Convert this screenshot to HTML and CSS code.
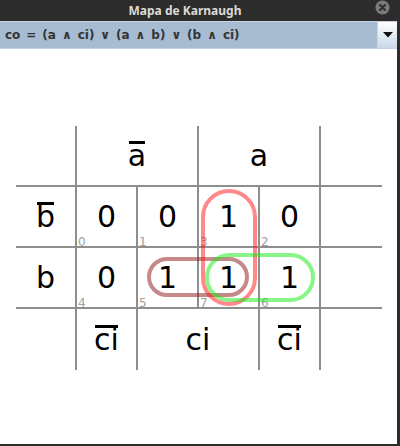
FILE: index.html
```html
<!DOCTYPE html>
<html>
<head>
    <title>Mapa de Karnaugh</title>
    <link rel="stylesheet" href="styles.css">
</head>
<body>
    <div class="window">
        <div class="titlebar">
            <span class="title">Mapa de Karnaugh</span>
            <svg class="close" width="15" height="15" viewBox="0 0 15 15">
                <circle cx="7.5" cy="7.5" r="7" fill="#7b7b7b"/>
                <path d="M5 5 L10 10 M10 5 L5 10" stroke="#2e2e2e" stroke-width="2" stroke-linecap="round"/>
            </svg>
        </div>
        <div class="combo">
            <div class="combo-field">co = (a ∧ ci) ∨ (a ∧ b) ∨ (b ∧ ci)</div>
            <div class="combo-button">
                <svg width="10" height="6" viewBox="0 0 10 6"><path d="M0 0 H10 L5 5.5 Z" fill="#111"/></svg>
            </div>
        </div>
        <div class="map-area">
            <div class="kmap">
                <!-- row 0 -->
                <div class="cell r b"></div>
                <div class="cell r b span2"><span class="neg">a</span></div>
                <div class="cell r b span2">a</div>
                <div class="cell b"></div>
                <!-- row 1 -->
                <div class="cell r b"><span class="neg">b</span></div>
                <div class="cell r b">0<span class="idx">0</span></div>
                <div class="cell r b">0<span class="idx">1</span></div>
                <div class="cell r b">1<span class="idx">3</span></div>
                <div class="cell r b">0<span class="idx">2</span></div>
                <div class="cell b"></div>
                <!-- row 2 -->
                <div class="cell r b">b</div>
                <div class="cell r b">0<span class="idx">4</span></div>
                <div class="cell r b">1<span class="idx">5</span></div>
                <div class="cell r b">1<span class="idx">7</span></div>
                <div class="cell r b">1<span class="idx">6</span></div>
                <div class="cell b"></div>
                <!-- row 3 -->
                <div class="cell r"></div>
                <div class="cell r"><span class="neg">ci</span></div>
                <div class="cell r span2">ci</div>
                <div class="cell r"><span class="neg">ci</span></div>
                <div class="cell"></div>

                <svg class="groups" width="366" height="244" viewBox="0 0 366 244">
                    <rect x="133" y="133" width="98" height="36" rx="18" fill="none" stroke="rgba(140,20,20,0.5)" stroke-width="4"/>
                    <rect x="187" y="65" width="52" height="113" rx="26" fill="none" stroke="rgba(255,20,20,0.5)" stroke-width="4"/>
                    <rect x="191" y="129" width="106" height="45" rx="22.5" fill="none" stroke="rgba(20,235,20,0.5)" stroke-width="4"/>
                </svg>
            </div>
        </div>
    </div>
</body>
</html>
```

FILE: styles.css
```css
html, body {
    margin: 0;
    padding: 0;
    height: 100%;
}
body {
    background: #2c2c2c;
}
.window {
    display: flex;
    flex-direction: column;
    height: 444px;
    width: 397px;
    background: #ffffff;
}
.titlebar {
    position: relative;
    height: 21px;
    background: #2c2c2c;
    display: flex;
    align-items: center;
    justify-content: center;
    padding-right: 30px;
    padding-left: 3px;
}
.title {
    font-family: "Noto Sans", sans-serif;
    font-weight: bold;
    font-size: 12px;
    color: #dcdad5;
}
.close {
    position: absolute;
    right: 7px;
    top: 0;
}
.combo {
    display: flex;
    background: #a7bbd1;
    border-top: 1px solid #c5d3e2;
    border-bottom: 1px solid #c5d3e2;
    box-sizing: border-box;
    height: 28px;
}
.combo-field {
    flex: 1;
    border-right: 1px solid #c9d6e4;
    font-family: "DejaVu Sans", sans-serif;
    font-weight: bold;
    font-size: 12px;
    word-spacing: 1.8px;
    color: #343434;
    white-space: pre;
    line-height: 26px;
    padding-left: 5px;
}
.combo-button {
    width: 19px;
    display: flex;
    align-items: center;
    justify-content: center;
    background: linear-gradient(to bottom, #ffffff, #c8d7e7);
}
.map-area {
    flex: 1;
}
.kmap {
    position: relative;
    display: grid;
    grid-template-columns: repeat(6, 61px);
    grid-template-rows: repeat(4, 61px);
    width: 366px;
    margin: 77px 0 0 16px;
    font-family: "DejaVu Sans", sans-serif;
    font-size: 30px;
    color: #000;
}
.cell {
    position: relative;
    box-sizing: border-box;
    display: flex;
    align-items: center;
    justify-content: center;
}
.cell.r {
    border-right: 2px solid #8e8e8e;
}
.cell.b {
    border-bottom: 2px solid #8e8e8e;
}
.span2 {
    grid-column: span 2;
}
.neg {
    position: relative;
}
.neg::before {
    content: "";
    position: absolute;
    left: 1px;
    right: 1px;
    top: 3px;
    height: 3px;
    background: #000;
}
.idx {
    position: absolute;
    left: 1px;
    bottom: -2px;
    font-size: 12px;
    line-height: 12px;
    color: #a0a0a0;
}
.groups {
    position: absolute;
    left: 0;
    top: 0;
    pointer-events: none;
}
```
